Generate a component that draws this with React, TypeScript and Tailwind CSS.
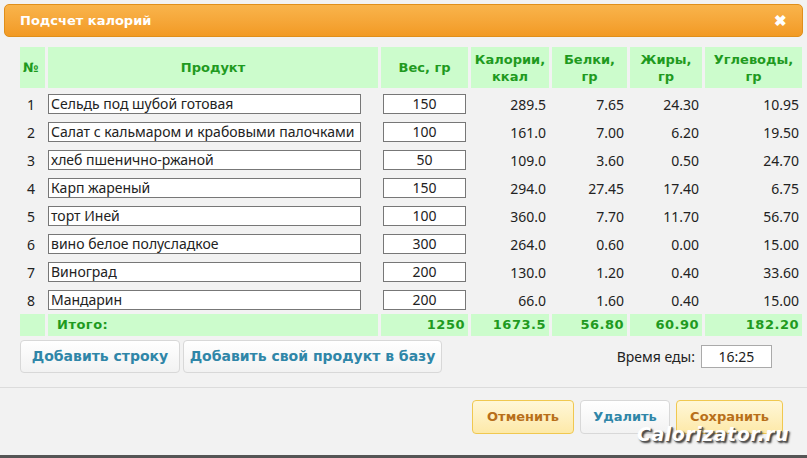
import React from "react";

const rows = [
  ["Сельдь под шубой готовая", "150", "289.5", "7.65", "24.30", "10.95"],
  ["Салат с кальмаром и крабовыми палочками", "100", "161.0", "7.00", "6.20", "19.50"],
  ["хлеб пшенично-ржаной", "50", "109.0", "3.60", "0.50", "24.70"],
  ["Карп жареный", "150", "294.0", "27.45", "17.40", "6.75"],
  ["торт Иней", "100", "360.0", "7.70", "11.70", "56.70"],
  ["вино белое полусладкое", "300", "264.0", "0.60", "0.00", "15.00"],
  ["Виноград", "200", "130.0", "1.20", "0.40", "33.60"],
  ["Мандарин", "200", "66.0", "1.60", "0.40", "15.00"],
];

const cols = "grid grid-cols-[25px_330px_87px_78px_75px_72px_97px] gap-x-[3px]";
const vf = { fontFamily: '"DejaVu Sans", Verdana, sans-serif' };

export default function App() {
  return (
    <div className="w-[807px] h-[458px] bg-[#f2f2f2] relative overflow-hidden text-[#222]" style={{ fontFamily: '"Noto Sans", "Open Sans", sans-serif' }}>
      <div className="mx-[4px] mt-[4px] h-[33px] rounded-[5px] border border-[#e08f1a] bg-gradient-to-b from-[#f9b44b] to-[#f29a23] flex items-center justify-between px-[15px]">
        <span className="text-white text-[13px] font-bold" style={vf}>Подсчет калорий</span>
        <span className="text-white text-[15px] font-bold">✖</span>
      </div>
      <div className="pl-[20px] pt-[10px]">
        <div className={cols + " text-[#1f9a1f] font-bold text-[13px] leading-[17px]"} style={vf}>
          {["№", "Продукт", "Вес, гр", "Калории, ккал", "Белки, гр", "Жиры, гр", "Углеводы, гр"].map((h, i) => (
            <div key={i} className={"bg-[#ccfccc] h-[41px] flex items-center text-center " + (i === 0 ? "justify-start pl-[3px]" : "justify-center px-1")}>{h}</div>
          ))}
        </div>
        <div className="mt-[2px]">
          {rows.map((r, i) => (
            <div key={i} className={cols + " h-[28px] items-center text-[14px]"}>
              <div className="pl-[7px]">{i + 1}</div>
              <div className="flex"><div className="w-[313px] h-[20px] border border-[#777] bg-white pl-[2px] leading-[18px] whitespace-nowrap overflow-hidden">{r[0]}</div></div>
              <div className="flex justify-center"><div className="w-[83px] h-[20px] border border-[#777] bg-white text-center leading-[18px]">{r[1]}</div></div>
              {r.slice(2).map((v, j) => (
                <div key={j} className="text-right pr-[3px]">{v}</div>
              ))}
            </div>
          ))}
        </div>
        <div className={cols + " h-[22px] items-center text-[#1f9a1f] font-bold text-[13px] tracking-[0.5px]"} style={vf}>
          <div className="bg-[#ccfccc] h-full" />
          <div className="bg-[#ccfccc] h-full flex items-center pl-[9px]">Итого:</div>
          {["1250", "1673.5", "56.80", "60.90", "182.20"].map((v, j) => (
            <div key={j} className="bg-[#ccfccc] h-full flex items-center justify-end pr-[3px]">{v}</div>
          ))}
        </div>
        <div className="flex items-center mt-[4px] pr-[35px]">
          <button className="h-[33px] w-[160px] rounded-[4px] border border-[#d8d8d8] bg-gradient-to-b from-white to-[#f2f2f2] text-[#2f86a8] font-bold text-[14px]" style={vf}>Добавить строку</button>
          <button className="ml-[3px] h-[33px] w-[259px] rounded-[4px] border border-[#d8d8d8] bg-gradient-to-b from-white to-[#f2f2f2] text-[#2f86a8] font-bold text-[14px]" style={vf}>Добавить свой продукт в базу</button>
          <div className="flex-1" />
          <span className="text-[14px] mr-[6px]">Время еды:</span>
          <div className="w-[71px] h-[23px] border border-[#aaa] bg-white text-center text-[14px] leading-[21px]">16:25</div>
        </div>
      </div>
      <div className="mt-[14px] border-t border-[#dcdcdc]" />
      <div className="flex justify-end gap-[6px] pr-[24px] mt-[12px]">
        <button className="h-[34px] w-[102px] rounded-[4px] border border-[#f0c850] bg-gradient-to-b from-[#fff7d8] to-[#fde9a8] text-[#b86f1a] font-bold text-[13px]" style={vf}>Отменить</button>
        <button className="h-[34px] w-[90px] rounded-[4px] border border-[#d8d8d8] bg-gradient-to-b from-white to-[#f2f2f2] text-[#2f86a8] font-bold text-[13px]" style={vf}>Удалить</button>
        <button className="h-[34px] w-[107px] rounded-[4px] border border-[#f0c850] bg-gradient-to-b from-[#fff7d8] to-[#fde9a8] text-[#b86f1a] font-bold text-[13px]" style={vf}>Сохранить</button>
      </div>
      <div className="absolute right-[18px] bottom-[10px] text-white font-bold italic text-[19px] tracking-[0.5px]" style={{ fontFamily: '"DejaVu Sans", sans-serif', textShadow: "1px 1px 0 #555, 2px 2px 2px #333" }}>Calorizator.ru</div>
      <div className="absolute left-0 right-0 bottom-0 h-[3px] bg-[#555]" />
    </div>
  );
}
